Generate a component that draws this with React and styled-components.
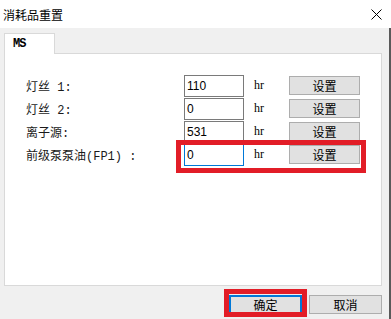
import React from "react";
import styled, { createGlobalStyle } from "styled-components";

const Global = createGlobalStyle`
  html, body { margin: 0; padding: 0; background: #f0f0f0; }
  body { font-family: "Noto Sans CJK SC", sans-serif; }
  * { box-sizing: border-box; }
`;

const Window = styled.div`
  width: 391px;
  height: 319px;
  background: #f0f0f0;
  display: flex;
  flex-direction: column;
  overflow: hidden;
`;

const TitleBar = styled.div`
  height: 28px;
  flex: none;
  background: #ffffff;
  display: flex;
  align-items: center;
  justify-content: space-between;
  padding: 0 9px 0 3px;
  font-family: "Noto Sans CJK SC", sans-serif;
  font-size: 12px;
  color: #000;
`;

const Body = styled.div`
  flex: 1;
  display: flex;
  flex-direction: column;
  padding: 5px 7px 0 4px;
  border-right: 2px solid #5a5a5a;
`;

const TabStrip = styled.div`
  display: flex;
  height: 21px;
  position: relative;
  z-index: 1;
  margin-bottom: -1px;
`;

const Tab = styled.div`
  width: 51px;
  height: 21px;
  background: #fff;
  border: 1px solid #d9d9d9;
  border-bottom: none;
  padding: 3px 0 0 8px;
  font-family: "Liberation Mono", "Noto Sans CJK SC", monospace;
  font-size: 12px;
  font-weight: bold;
  letter-spacing: -1px;
  line-height: 14px;
  color: #000;
`;

const Panel = styled.div`
  height: 233px;
  background: #fff;
  border: 1px solid #d9d9d9;
  padding: 20px 0 0 21px;
`;

const Grid = styled.div`
  display: grid;
  grid-template-columns: 158px 60px 45px 71px;
  grid-auto-rows: 23px;
  align-items: center;
`;

const Row = styled.div`
  display: contents;
`;

const Label = styled.div`
  font-family: "Liberation Mono", "Noto Sans CJK SC", monospace;
  font-size: 12px;
  color: #1a1a1a;
  white-space: nowrap;
`;

const Field = styled.div`
  height: 22px;
  border: 1px solid ${(p) => (p.$focused ? "#0078d7" : "#7a7a7a")};
  background: #fff;
  font-family: "Liberation Sans", sans-serif;
  font-size: 12px;
  line-height: 20px;
  padding-left: 2px;
  color: #000;
  position: relative;
`;

const Unit = styled.div`
  font-family: "Liberation Serif", serif;
  font-size: 12px;
  padding-left: 10px;
  color: #000;
`;

const Button = styled.div`
  width: ${(p) => p.$w || 71}px;
  height: 19px;
  background: #e1e1e1;
  border: ${(p) => (p.$default ? "2px solid #0078d7" : "1px solid #adadad")};
  display: flex;
  align-items: center;
  justify-content: center;
  font-family: "Noto Sans CJK SC", sans-serif;
  font-size: 12px;
  color: #000;
  position: relative;
`;

const Highlight = styled.div`
  position: absolute;
  border: 5px solid #e21d27;
  pointer-events: none;
`;

const RowCell = styled.div`
  position: relative;
  grid-column: 1 / -1;
  grid-row: ${(p) => p.$row};
  height: 23px;
`;

const Footer = styled.div`
  display: flex;
  justify-content: flex-end;
  gap: 7px;
  padding: 9px 0 0 0;
`;

const FooterSlot = styled.div`
  position: relative;
`;

const rows = [
  { label: "灯丝 1:", value: "110" },
  { label: "灯丝 2:", value: "0" },
  { label: "离子源:", value: "531" },
  { label: "前级泵泵油(FP1) :", value: "0", focused: true },
];

export default function App() {
  return (
    <>
      <Global />
      <Window>
        <TitleBar>
          <span>消耗品重置</span>
          <svg width="11" height="11" viewBox="0 0 11 11">
            <path d="M0.5 0.5 L10.5 10.5 M10.5 0.5 L0.5 10.5" stroke="#000" strokeWidth="1" />
          </svg>
        </TitleBar>
        <Body>
          <TabStrip>
            <Tab>MS</Tab>
          </TabStrip>
          <Panel>
            <Grid>
              {rows.map((r, i) => (
                <Row key={i}>
                  <Label style={{ gridRow: i + 1, gridColumn: 1 }}>{r.label}</Label>
                  <Field style={{ gridRow: i + 1, gridColumn: 2 }} $focused={r.focused}>
                    {r.value}
                  </Field>
                  <Unit style={{ gridRow: i + 1, gridColumn: 3 }}>hr</Unit>
                  <Button style={{ gridRow: i + 1, gridColumn: 4 }} $w={71}>设置</Button>
                </Row>
              ))}
              <RowCell $row={4}>
                <Highlight style={{ left: 150, right: -6, top: -3, bottom: -7 }} />
              </RowCell>
            </Grid>
          </Panel>
          <Footer>
            <FooterSlot>
              <Button $w={73} $default>确定</Button>
              <Highlight style={{ left: -5, right: -5, top: -6, bottom: -3 }} />
            </FooterSlot>
            <Button $w={73}>取消</Button>
          </Footer>
        </Body>
      </Window>
    </>
  );
}
